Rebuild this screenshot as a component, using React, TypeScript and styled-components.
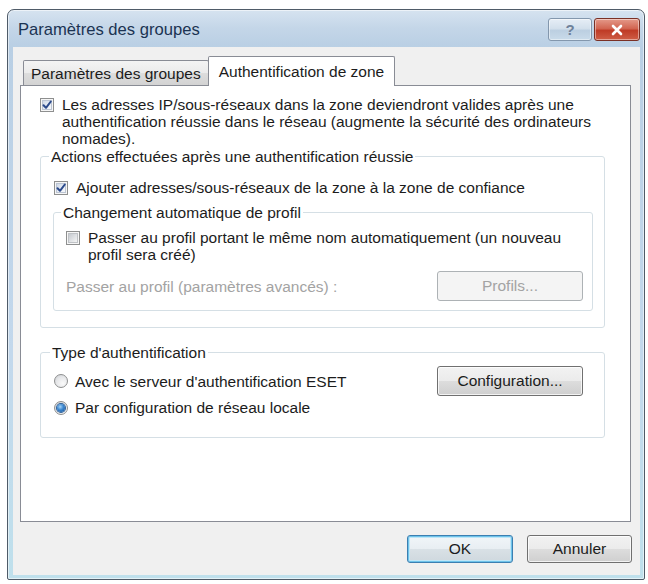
import React from "react";
import styled, { createGlobalStyle } from "styled-components";

const GlobalStyle = createGlobalStyle`
  html, body { margin: 0; padding: 0; background: #ffffff; }
  body { font-family: "Liberation Sans", Arial, sans-serif; font-size: 15.5px; color: #1c1c1c; }
  * { box-sizing: border-box; }
`;

const Window = styled.div`
  margin: 9px 0 0 7px;
  width: 638px;
  height: 571px;
  border: 1px solid #4f5b68;
  border-radius: 7px 7px 2px 2px;
  background: linear-gradient(180deg, #d6e3f0 0px, #c4d6e8 18px, #b9cfe4 37px, #c3d8ec 60%, #bfe0ec 100%);
  display: flex;
  flex-direction: column;
  box-shadow: inset 0 0 0 1px rgba(255, 255, 255, 0.55);
`;

const TitleBar = styled.div`
  height: 37px;
  flex: none;
  display: flex;
  align-items: flex-start;
  padding: 0 4px 0 10px;
`;

const Title = styled.div`
  margin-top: 10px;
  font-size: 16.6px;
  line-height: 20px;
  color: #1b3352;
`;

const Captions = styled.div`
  margin-left: auto;
  margin-top: 8px;
  display: flex;
  gap: 2px;
`;

const CaptionButton = styled.div<{ $close?: boolean }>`
  width: ${(p) => (p.$close ? 46 : 44)}px;
  height: 23px;
  border-radius: 3px;
  border: 1px solid ${(p) => (p.$close ? "#7a3025" : "#8397ad")};
  background: ${(p) =>
    p.$close
      ? "linear-gradient(180deg, #e49a8a 0%, #d26652 45%, #bf3b26 55%, #cf5e46 100%)"
      : "linear-gradient(180deg, #e6eef6 0%, #d3e0ec 45%, #bccfe1 55%, #c9dbea 100%)"};
  box-shadow: inset 0 0 0 1px rgba(255, 255, 255, 0.45);
  display: flex;
  align-items: center;
  justify-content: center;
  color: #6f819a;
  font-weight: bold;
  font-size: 15px;
`;

const Client = styled.div`
  flex: 1;
  margin: 0 4px 4px 5px;
  background: #f0f0f0;
  display: flex;
  flex-direction: column;
  padding: 9px 8px 12px 7px;
`;

const TabStrip = styled.div`
  height: 30px;
  margin-bottom: -1px;
  display: flex;
  align-items: flex-start;
  padding-left: 3px;
  position: relative;
  z-index: 1;
`;

const Tab = styled.div<{ $active?: boolean }>`
  height: ${(p) => (p.$active ? 30 : 25)}px;
  margin-top: ${(p) => (p.$active ? 0 : 4)}px;
  margin-left: ${(p) => (p.$active ? -1 : 0)}px;
  border: 1px solid #898c95;
  border-bottom: none;
  border-radius: 2px 2px 0 0;
  background: ${(p) =>
    p.$active ? "#ffffff" : "linear-gradient(180deg, #f4f4f4 0%, #ebebeb 50%, #dddddd 51%, #d3d3d3 100%)"};
  padding: 0 ${(p) => (p.$active ? 10 : 7)}px;
  padding-top: ${(p) => (p.$active ? 0 : 1)}px;
  display: flex;
  align-items: center;
  white-space: nowrap;
`;

const Panel = styled.div`
  height: 437px;
  flex: none;
  margin-right: 1px;
  border: 1px solid #898c95;
  background: #ffffff;
  padding: 10px 25px 0 19px;
  display: flex;
  flex-direction: column;
`;

const CheckRow = styled.label<{ $indent?: number; $top?: number }>`
  display: flex;
  align-items: flex-start;
  gap: 8px;
  line-height: 17px;
  padding-left: ${(p) => p.$indent ?? 0}px;
  margin-top: ${(p) => p.$top ?? 0}px;
  white-space: nowrap;
`;

const Box = styled.span`
  width: 14px;
  height: 14px;
  flex: none;
  margin-top: 2px;
  border: 1px solid #8e8f8f;
  background: #f6f6f6;
  padding: 1px;
  display: flex;
`;

const BoxInner = styled.span<{ $checked?: boolean }>`
  flex: 1;
  background: ${(p) =>
    p.$checked
      ? "linear-gradient(135deg, #cfd8e6 0%, #e9eef6 60%, #f8f9fb 100%)"
      : "linear-gradient(135deg, #c6cacf 0%, #e0e2e5 55%, #f4f4f4 100%)"};
  border: 1px solid ${(p) => (p.$checked ? "#bcc5d3" : "#bfc2c6")};
  position: relative;
`;

const CheckMark = styled.svg`
  position: absolute;
  left: -2px;
  top: -2px;
`;

const Group = styled.fieldset<{ $top?: number }>`
  margin: ${(p) => p.$top ?? 0}px 0 0 0;
  padding: 0;
  min-width: 0;
  border: 1px solid #d5dfe5;
  border-radius: 3px;
`;

const Legend = styled.legend<{ $offset?: number }>`
  margin-left: ${(p) => p.$offset ?? 8}px;
  padding: 0 2px;
  line-height: 17px;
  white-space: nowrap;
`;

const GroupBody = styled.div<{ $pad: string }>`
  padding: ${(p) => p.$pad};
  display: flex;
  flex-direction: column;
`;

const InlineRow = styled.div<{ $top?: number }>`
  display: flex;
  align-items: center;
  justify-content: space-between;
  margin-top: ${(p) => p.$top ?? 0}px;
`;

const GreyLabel = styled.span`
  color: #a3a3a3;
  line-height: 17px;
  white-space: nowrap;
`;

const Button = styled.button<{ $w: number; $h?: number; $default?: boolean }>`
  width: ${(p) => p.$w}px;
  height: ${(p) => p.$h ?? 28}px;
  flex: none;
  border: 1px solid ${(p) => (p.$default ? "#3c7fb1" : "#707070")};
  border-radius: 3px;
  background: ${(p) =>
    p.$default
      ? "linear-gradient(180deg, #f1f6f9 0%, #e8eef2 49%, #d9e1e6 50%, #cfd8de 100%)"
      : "linear-gradient(180deg, #f2f2f2 0%, #ebebeb 49%, #dddddd 50%, #cfcfcf 100%)"};
  box-shadow: ${(p) =>
    p.$default
      ? "inset 0 0 0 1px #6ec3ea, inset 0 0 0 2px #bfe6f7"
      : "inset 0 0 0 1px rgba(255,255,255,0.75)"};
  font-family: "Liberation Sans", Arial, sans-serif;
  font-size: 15.5px;
  color: #1c1c1c;
  padding: 0;
  &:disabled {
    border-color: #adb2b5;
    background: #f4f4f4;
    box-shadow: none;
    color: #a3a3a3;
  }
`;

const RadioRow = styled.label`
  display: flex;
  align-items: center;
  gap: 7px;
  line-height: 17px;
  white-space: nowrap;
`;

const RadioCircle = styled.span`
  width: 14px;
  height: 14px;
  flex: none;
  border-radius: 50%;
  border: 1px solid #8e8f8f;
  background: radial-gradient(circle at 65% 70%, #fafafa 0%, #e6e7e9 55%, #c9ccd1 100%);
  display: flex;
  align-items: center;
  justify-content: center;
`;

const RadioDot = styled.span`
  width: 8px;
  height: 8px;
  border-radius: 50%;
  background: radial-gradient(circle at 40% 35%, #a6d4f7 0%, #3b86cf 45%, #174f91 100%);
  box-shadow: 0 0 0 1px #2c5f98;
`;

const ButtonRow = styled.div`
  margin-top: 13px;
  display: flex;
  justify-content: flex-end;
  gap: 14px;
`;

function Check({ checked }: { checked?: boolean }) {
  return (
    <Box>
      <BoxInner $checked={checked}>
        {checked && (
          <CheckMark width="12" height="12" viewBox="0 0 12 12">
            <path d="M2.5 6.2 L5 8.8 L9.8 2.5" fill="none" stroke="#2b4a8c" strokeWidth="2" strokeLinecap="round" strokeLinejoin="round" />
          </CheckMark>
        )}
      </BoxInner>
    </Box>
  );
}

function Radio({ on }: { on?: boolean }) {
  return <RadioCircle>{on && <RadioDot />}</RadioCircle>;
}

export default function App() {
  return (
    <>
      <GlobalStyle />
      <Window>
        <TitleBar>
          <Title>Paramètres des groupes</Title>
          <Captions>
            <CaptionButton>?</CaptionButton>
            <CaptionButton $close>
              <svg width="14" height="12" viewBox="0 0 14 12">
                <path d="M3 2 L11 10 M11 2 L3 10" stroke="#ffffff" strokeWidth="2.6" strokeLinecap="round" />
              </svg>
            </CaptionButton>
          </Captions>
        </TitleBar>
        <Client>
          <TabStrip>
            <Tab>Paramètres des groupes</Tab>
            <Tab $active>Authentification de zone</Tab>
          </TabStrip>
          <Panel>
            <CheckRow>
              <Check checked />
              <span>
                Les adresses IP/sous-réseaux dans la zone deviendront valides après une
                <br />
                authentification réussie dans le réseau (augmente la sécurité des ordinateurs
                <br />
                nomades).
              </span>
            </CheckRow>

            <Group $top={1}>
              <Legend $offset={8}>Actions effectuées après une authentification réussie</Legend>
              <GroupBody $pad="14px 11px 16px 12px">
                <CheckRow $indent={1}>
                  <Check checked />
                  <span>Ajouter adresses/sous-réseaux de la zone à la zone de confiance</span>
                </CheckRow>
                <Group $top={8}>
                  <Legend $offset={7}>Changement automatique de profil</Legend>
                  <GroupBody $pad="8px 9px 9px 12px">
                    <CheckRow>
                      <Check />
                      <span>
                        Passer au profil portant le même nom automatiquement (un nouveau
                        <br />
                        profil sera créé)
                      </span>
                    </CheckRow>
                    <InlineRow $top={8}>
                      <GreyLabel>Passer au profil (paramètres avancés) :</GreyLabel>
                      <Button $w={146} $h={30} disabled>
                        Profils...
                      </Button>
                    </InlineRow>
                  </GroupBody>
                </Group>
              </GroupBody>
            </Group>

            <Group $top={16}>
              <Legend $offset={9}>Type d'authentification</Legend>
              <GroupBody $pad="5px 21px 21px 13px">
                <InlineRow>
                  <RadioRow>
                    <Radio />
                    <span>Avec le serveur d'authentification ESET</span>
                  </RadioRow>
                  <Button $w={146} $h={30}>
                    Configuration...
                  </Button>
                </InlineRow>
                <InlineRow $top={3}>
                  <RadioRow>
                    <Radio on />
                    <span>Par configuration de réseau locale</span>
                  </RadioRow>
                </InlineRow>
              </GroupBody>
            </Group>
          </Panel>
          <ButtonRow>
            <Button $w={106} $default>
              OK
            </Button>
            <Button $w={105}>Annuler</Button>
          </ButtonRow>
        </Client>
      </Window>
    </>
  );
}
